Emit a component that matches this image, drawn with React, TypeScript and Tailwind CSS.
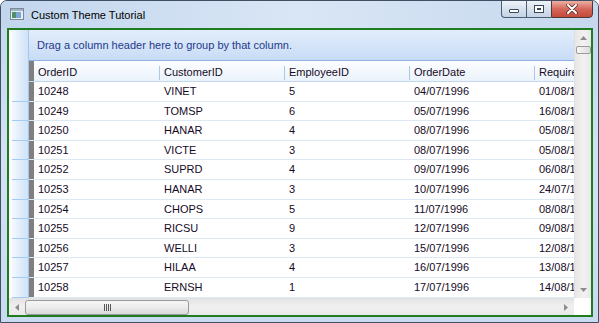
import React from "react";

const rows = [
  ["10248", "VINET", "5", "04/07/1996", "01/08/1996"],
  ["10249", "TOMSP", "6", "05/07/1996", "16/08/1996"],
  ["10250", "HANAR", "4", "08/07/1996", "05/08/1996"],
  ["10251", "VICTE", "3", "08/07/1996", "05/08/1996"],
  ["10252", "SUPRD", "4", "09/07/1996", "06/08/1996"],
  ["10253", "HANAR", "3", "10/07/1996", "24/07/1996"],
  ["10254", "CHOPS", "5", "11/07/1996", "08/08/1996"],
  ["10255", "RICSU", "9", "12/07/1996", "09/08/1996"],
  ["10256", "WELLI", "3", "15/07/1996", "12/08/1996"],
  ["10257", "HILAA", "4", "16/07/1996", "13/08/1996"],
  ["10258", "ERNSH", "1", "17/07/1996", "14/08/1996"],
];

const columns = ["OrderID", "CustomerID", "EmployeeID", "OrderDate", "RequiredDate"];

function WindowIcon() {
  return (
    <svg width="14" height="12" viewBox="0 0 14 12">
      <rect x="0.5" y="0.5" width="13" height="11" fill="#e9eef3" stroke="#7b8896" />
      <rect x="1" y="1" width="12" height="2" fill="#9fb2c6" />
      <rect x="2" y="4" width="4" height="6" fill="#4f8f6a" />
      <rect x="6" y="4" width="5" height="6" fill="#7aa7d6" />
    </svg>
  );
}

function CaptionButtons() {
  return (
    <div className="flex h-[18px] -mt-px mr-[5px]">
      <div className="w-[25px] h-full border border-[#4d5d73] border-r-0 rounded-bl-[4px] bg-gradient-to-b from-[#eef3f9] via-[#d7e2ee] to-[#c3d2e3] flex items-center justify-center">
        <div className="w-[10px] h-[4px] mt-[4px] border border-[#3b4656] bg-white rounded-[1px]" />
      </div>
      <div className="w-[25px] h-full border border-[#4d5d73] border-r-0 bg-gradient-to-b from-[#eef3f9] via-[#d7e2ee] to-[#c3d2e3] flex items-center justify-center">
        <div className="w-[10px] h-[8px] border border-[#3b4656] bg-white flex items-center justify-center">
          <div className="w-[4px] h-[2px] border border-[#3b4656]" />
        </div>
      </div>
      <div className="w-[42px] h-full border border-[#4d3a3a] rounded-br-[4px] bg-gradient-to-b from-[#e9b0a4] via-[#d4675a] to-[#c4493a] flex items-center justify-center">
        <svg width="12" height="10" viewBox="0 0 12 10">
          <path d="M2 1 L10 9 M10 1 L2 9" stroke="#4a2a24" strokeWidth="3.4" strokeLinecap="round" />
          <path d="M2 1 L10 9 M10 1 L2 9" stroke="#ffffff" strokeWidth="2" strokeLinecap="round" />
        </svg>
      </div>
    </div>
  );
}

export default function App() {
  return (
    <div className="w-[599px] h-[323px] flex flex-col overflow-hidden rounded-t-[7px] border border-[#404f63] bg-gradient-to-b from-[#c4d7ee] via-[#d3e2f3] to-[#c9dbef] font-['Liberation_Sans',Arial,sans-serif] text-[11px] text-[#160a26]">
      {/* title bar */}
      <div className="h-[27px] shrink-0 flex items-start bg-gradient-to-r from-[#c2d6ee] via-[#d9e6f5] to-[#c6d8ee]">
        <div className="pl-[9px] pt-[7px]">
          <WindowIcon />
        </div>
        <div className="pl-[7px] pt-[6px] text-[11px] text-black">Custom Theme Tutorial</div>
        <div className="flex-1" />
        <CaptionButtons />
      </div>

      {/* client */}
      <div className="flex-1 flex min-h-0 pl-[6px] pr-[5px] pb-[5px]">
        <div className="flex-1 min-w-0 flex flex-col border-2 border-[#1f7d1f] bg-white overflow-hidden">
          <div className="flex-1 flex min-h-0">
            {/* left strip */}
            <div className="w-[20px] shrink-0 flex flex-col bg-gradient-to-r from-[#ffffff] via-[#e4effb] to-[#cfe2f8] border-r border-[#a9c6ea]">
              <div className="h-[52px] shrink-0" />
              {rows.map((r) => (
                <div key={r[0]} className="h-[19.6px] shrink-0 ml-[3px] border-b border-[#a6cbf3]" />
              ))}
            </div>

            {/* grid */}
            <div className="flex-1 flex flex-col min-w-0 overflow-hidden">
              <div className="h-[31px] shrink-0 flex items-center pl-[8px] bg-gradient-to-b from-[#e2edfb] to-[#c8dcf6] border-b border-[#8db2e2] text-[#1f3a8a] whitespace-nowrap">
                Drag a column header here to group by that column.
              </div>
              <div className="h-[21px] shrink-0 flex bg-gradient-to-b from-[#fdfeff] to-[#eaf2fb] border-b border-[#c3d7ef]">
                <div className="w-[5px] shrink-0 bg-[#7f7f7f]" />
                {columns.map((c, i) => (
                  <div key={c} className="w-[125px] shrink-0 flex items-center pt-[3px] whitespace-nowrap">
                    {i > 0 && <div className="w-px h-[14px] bg-[#a9c5e7] mr-[4px]" />}
                    <span className={i === 0 ? "pl-[4px]" : ""}>{c}</span>
                  </div>
                ))}
              </div>
              {rows.map((r) => (
                <div key={r[0]} className="h-[19.6px] shrink-0 flex items-center border-b border-[#dde8f5]">
                  <div className="w-[5px] h-full shrink-0 bg-[#7f7f7f]" />
                  {r.map((v, i) => (
                    <div
                      key={i}
                      className={`w-[125px] shrink-0 whitespace-nowrap overflow-hidden ${i === 0 ? "pl-[4px]" : "pl-[5px]"}`}
                    >
                      {v}
                    </div>
                  ))}
                </div>
              ))}
            </div>

            {/* vertical scrollbar */}
            <div className="w-[17px] shrink-0 flex flex-col items-center bg-gradient-to-r from-[#e6e6e6] via-[#f2f2f2] to-[#e9e9e9] border-l border-[#e0e0e0]">
              <div className="h-[16px] flex items-center justify-center">
                <svg width="7" height="4" viewBox="0 0 7 4">
                  <path d="M3.5 0 L7 4 L0 4 Z" fill="#8c8c8c" />
                </svg>
              </div>
              <div className="w-[15px] h-[8px] rounded-[2px] border border-[#9c9c9c] bg-gradient-to-r from-[#f6f6f6] to-[#dcdcdc]" />
              <div className="flex-1" />
              <div className="h-[16px] flex items-center justify-center">
                <svg width="7" height="4" viewBox="0 0 7 4">
                  <path d="M0 0 L7 0 L3.5 4 Z" fill="#8c8c8c" />
                </svg>
              </div>
            </div>
          </div>

          {/* horizontal scrollbar */}
          <div className="h-[17px] shrink-0 flex">
            <div className="flex-1 flex items-center bg-gradient-to-b from-[#e4e4e4] via-[#f0f0f0] to-[#e8e8e8] border-t border-[#e2e2e2]">
              <div className="w-[16px] flex items-center justify-center">
                <svg width="4" height="7" viewBox="0 0 4 7">
                  <path d="M4 0 L4 7 L0 3.5 Z" fill="#8c8c8c" />
                </svg>
              </div>
              <div className="w-[164px] h-[15px] rounded-[3px] border border-[#9a9a9a] bg-gradient-to-b from-[#f6f6f6] via-[#ececec] to-[#d9d9d9] flex items-center justify-center">
                <div className="flex gap-[1px]">
                  <div className="w-px h-[7px] bg-[#555]" />
                  <div className="w-px h-[7px] bg-[#555]" />
                  <div className="w-px h-[7px] bg-[#555]" />
                  <div className="w-px h-[7px] bg-[#555]" />
                </div>
              </div>
              <div className="flex-1" />
              <div className="w-[16px] flex items-center justify-center">
                <svg width="4" height="7" viewBox="0 0 4 7">
                  <path d="M0 0 L4 3.5 L0 7 Z" fill="#8c8c8c" />
                </svg>
              </div>
            </div>
            <div className="w-[17px] shrink-0 bg-white" />
          </div>
        </div>
      </div>
    </div>
  );
}
